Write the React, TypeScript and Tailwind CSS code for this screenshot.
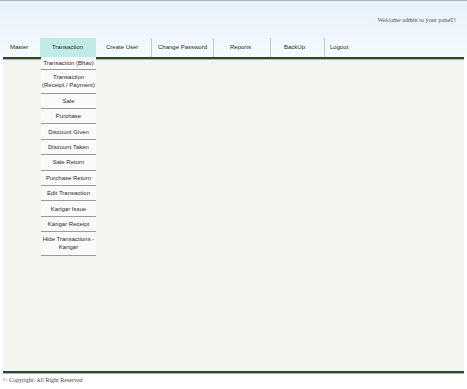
import React from "react";

const navItems: { label: string; w: string; pl: string; border: boolean; active?: boolean }[] = [
  { label: "Master", w: "w-[37px]", pl: "pl-[7px]", border: false },
  { label: "Transaction", w: "w-[56px]", pl: "pl-[12px]", border: false, active: true },
  { label: "Create User", w: "w-[55px]", pl: "pl-[10px]", border: false },
  { label: "Change Password", w: "w-[62px]", pl: "pl-[6px]", border: true },
  { label: "Reports", w: "w-[57px]", pl: "pl-[16px]", border: true },
  { label: "BackUp", w: "w-[54px]", pl: "pl-[13px]", border: true },
  { label: "Logout", w: "w-[60px]", pl: "pl-[5px]", border: true },
];

const dropItems: { label: string[]; h: string }[] = [
  { label: ["Transaction (Bhav)"], h: "h-[13px]" },
  { label: ["Transaction", "(Receipt / Payment)"], h: "h-[23.6px]" },
  { label: ["Sale"], h: "h-[15.4px]" },
  { label: ["Purchase"], h: "h-[15.4px]" },
  { label: ["Discount Given"], h: "h-[15.4px]" },
  { label: ["Discount Taken"], h: "h-[15.4px]" },
  { label: ["Sale Return"], h: "h-[15.4px]" },
  { label: ["Purchase Return"], h: "h-[15.4px]" },
  { label: ["Edit Transaction"], h: "h-[15.4px]" },
  { label: ["Karigar Issue"], h: "h-[15.4px]" },
  { label: ["Karigar Receipt"], h: "h-[15.4px]" },
  { label: ["Hide Transactions -", "Karigar"], h: "h-[23.6px]" },
];

export default function App() {
  return (
    <div className="w-[467px] h-[389px] bg-white overflow-hidden relative" style={{ fontFamily: '"Liberation Sans", Arial, sans-serif' }}>
      <div className="h-[57px] border-t border-[#a9b3ba] bg-gradient-to-b from-[#e5f2fa] to-[#f6fafd] flex flex-col">
        <div className="flex justify-end pr-[11px] pt-[15px] h-[37px]">
          <span className="text-[6.2px] leading-[7px] text-[#555]" style={{ fontFamily: '"Liberation Serif", "Times New Roman", serif' }}>
            Welcome admin to your panel!!
          </span>
        </div>
        <div className="flex h-[19px] pl-[3px]">
          {navItems.map((it) => (
            <div
              key={it.label}
              className={`${it.w} ${it.pl} flex items-center text-[6px] text-[#2a2a2a] ${it.border ? "border-l border-[#c3c9cc]" : ""} ${it.active ? "bg-[#c0ebe7]" : ""}`}
            >
              {it.label}
            </div>
          ))}
        </div>
      </div>
      <div className="mx-[3px] h-[2px] bg-[#2c4b1f]" />
      <div className="mx-[3px] h-[1px] bg-[#a8c28e]" />
      <div className="mx-[3px] h-[311px] bg-[#f3f5ee] relative">
        <div className="absolute left-[38px] top-[-3px] w-[55px] bg-[#fafafa] z-10 flex flex-col">
          {dropItems.map((d) => (
            <div
              key={d.label.join(" ")}
              className={`${d.h} border-b border-[#9a9a9a] flex flex-col items-center justify-center text-center text-[6px] leading-[8px] text-[#2a2a2a]`}
            >
              {d.label.map((l) => (
                <span key={l}>{l}</span>
              ))}
            </div>
          ))}
        </div>
      </div>
      <div className="mx-[3px] h-[2px] bg-[#2c4b1f]" />
      <div className="mx-[3px] h-[1px] bg-[#a8c28e]" />
      <div
        className="pl-[3px] pt-[3px] text-[6px] leading-[7px] text-[#444]"
        style={{ fontFamily: '"Liberation Serif", "Times New Roman", serif' }}
      >
        © Copyright: All Right Reserved
      </div>
    </div>
  );
}
